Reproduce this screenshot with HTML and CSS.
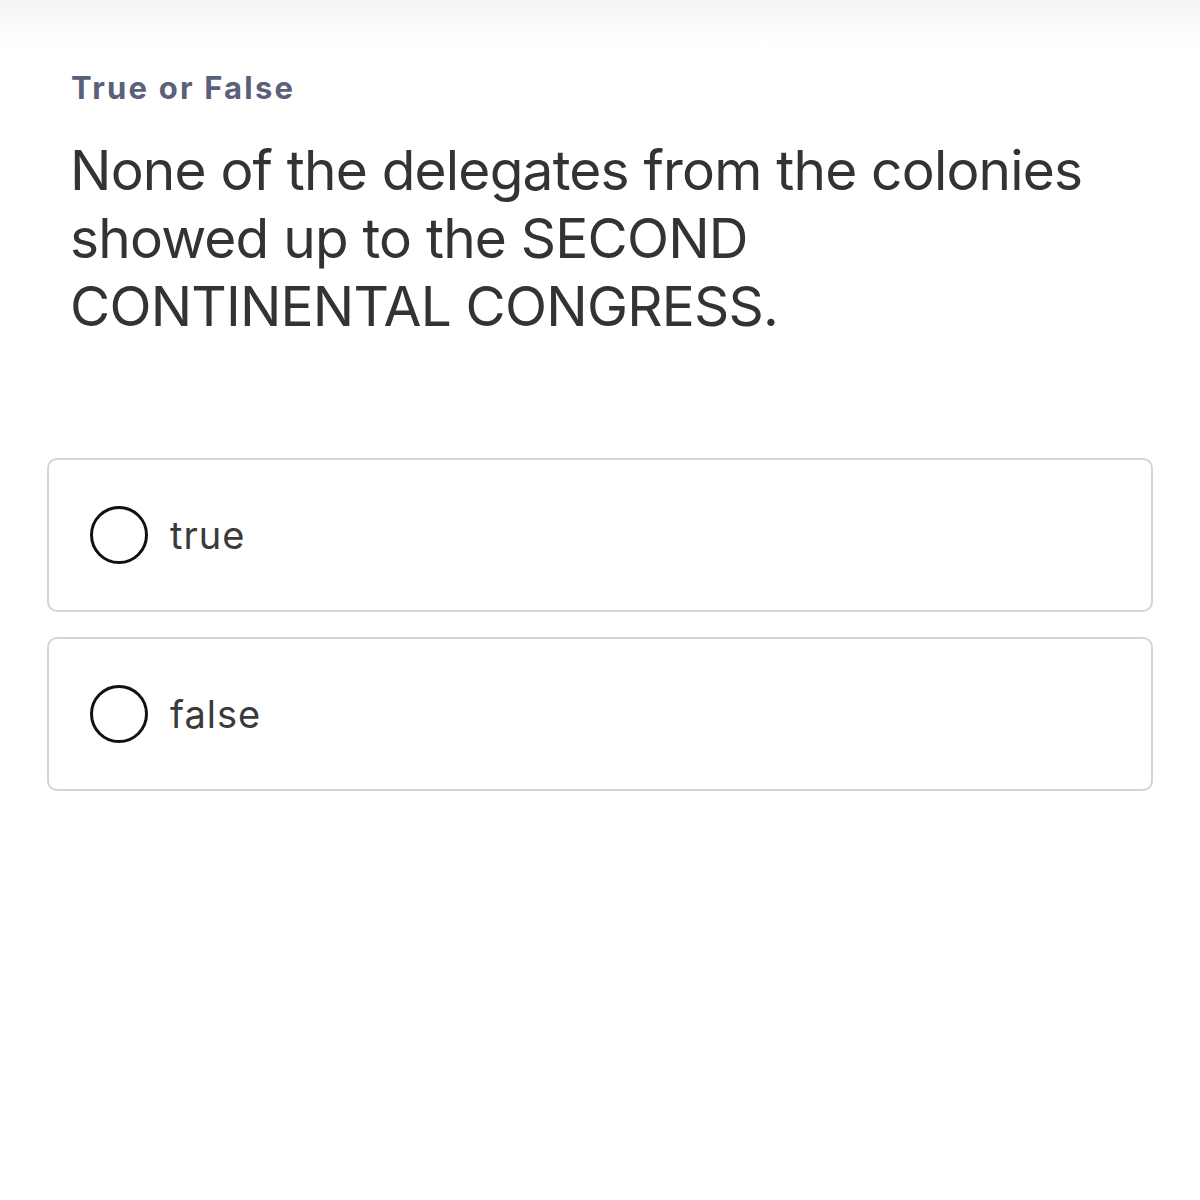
FILE: index.html
```html
<!DOCTYPE html>
<html>
<head>
<meta charset="utf-8">
<link rel="stylesheet" href="styles.css">
</head>
<body>
<div class="topbar"></div>
<main class="quiz">
  <div class="kind">True or False</div>
  <h1 class="question">None of the delegates from the colonies showed up to the SECOND CONTINENTAL CONGRESS.</h1>
  <div class="options">
    <label class="option"><span class="radio"></span><span class="opt-text">true</span></label>
    <label class="option"><span class="radio"></span><span class="opt-text">false</span></label>
  </div>
</main>
</body>
</html>
```
FILE: styles.css
```css
html, body { margin: 0; padding: 0; background: #fff; }
body { font-family: Inter, "Liberation Sans", Arial, sans-serif; width: 1200px; height: 1200px; overflow: hidden; }
.topbar { height: 46px; background: linear-gradient(#f3f3f3, #ffffff); }
.quiz { padding: 0 47px 0 47px; }
.kind { margin: 24px 0 0 24px; font-size: 31px; font-weight: 700; color: #5b5f79; line-height: 36px; letter-spacing: 2.2px; }
.question { margin: 30px 60px 0 23px; font-size: 55px; font-weight: normal; color: #333333; line-height: 68px; letter-spacing: -0.8px; }
.options { margin-top: 118px; display: flex; flex-direction: column; gap: 25px; }
.option { display: flex; align-items: center; height: 150px; border: 2px solid #d3d3db; border-radius: 10px; padding-left: 41px; }
.radio { width: 52px; height: 52px; border: 3px solid #111; border-radius: 50%; box-sizing: content-box; flex: none; }
.opt-text { margin-left: 22px; font-size: 38px; color: #3a3a3a; letter-spacing: 1px; }
```
